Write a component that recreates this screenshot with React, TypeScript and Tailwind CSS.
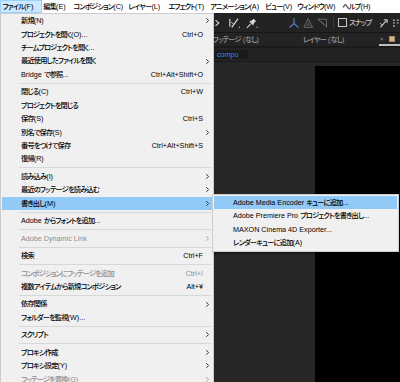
import React from 'react';

type Item =
  | { label: string; shortcut?: string; arrow?: boolean; disabled?: boolean; active?: boolean }
  | 'sep';

const items: Item[] = [
  { label: '新規(N)', arrow: true },
  { label: 'プロジェクトを開く(O)...', shortcut: 'Ctrl+O' },
  { label: 'チームプロジェクトを開く...' },
  { label: '最近使用したファイルを開く', arrow: true },
  { label: 'Bridge で参照...', shortcut: 'Ctrl+Alt+Shift+O' },
  'sep',
  { label: '閉じる(C)', shortcut: 'Ctrl+W' },
  { label: 'プロジェクトを閉じる' },
  { label: '保存(S)', shortcut: 'Ctrl+S' },
  { label: '別名で保存(S)', arrow: true },
  { label: '番号をつけて保存', shortcut: 'Ctrl+Alt+Shift+S' },
  { label: '復帰(R)' },
  'sep',
  { label: '読み込み(I)', arrow: true },
  { label: '最近のフッテージを読み込む', arrow: true },
  { label: '書き出し(M)', arrow: true, active: true },
  'sep',
  { label: 'Adobe からフォントを追加...' },
  'sep',
  { label: 'Adobe Dynamic Link', arrow: true, disabled: true },
  'sep',
  { label: '検索', shortcut: 'Ctrl+F' },
  'sep',
  { label: 'コンポジションにフッテージを追加', shortcut: 'Ctrl+/', disabled: true },
  { label: '複数アイテムから新規コンポジション', shortcut: 'Alt+¥' },
  'sep',
  { label: '依存関係', arrow: true },
  { label: 'フォルダーを監視(W)...' },
  'sep',
  { label: 'スクリプト', arrow: true },
  'sep',
  { label: 'プロキシ作成', arrow: true },
  { label: 'プロキシ設定(Y)', arrow: true },
  { label: 'フッテージを置換(G)', arrow: true, disabled: true },
];

const subItems = [
  'Adobe Media Encoder キューに追加...',
  'Adobe Premiere Pro プロジェクトを書き出し...',
  'MAXON Cinema 4D Exporter...',
  'レンダーキューに追加(A)',
];

const menubar: { label: string; w: string }[] = [
  { label: '編集(E)', w: 'w-[30px]' },
  { label: 'コンポジション(C)', w: 'w-[55px]' },
  { label: 'レイヤー(L)', w: 'w-[40px]' },
  { label: 'エフェクト(T)', w: 'w-[42px]' },
  { label: 'アニメーション(A)', w: 'w-[55px]' },
  { label: 'ビュー(V)', w: 'w-[32px]' },
  { label: 'ウィンドウ(W)', w: 'w-[45px]' },
  { label: 'ヘルプ(H)', w: 'w-[50px]' },
];

const CJK = /([\u3000-\u30ff\u4e00-\u9fff\uff00-\uffef]+)/;

function T({ s }: { s: string }) {
  return (
    <span className="whitespace-nowrap">
      {s.split(CJK).map((p, i) =>
        i % 2 === 1 ? (
          <span key={i} className="tracking-[-0.8px] font-medium">
            {p}
          </span>
        ) : (
          <React.Fragment key={i}>{p}</React.Fragment>
        )
      )}
    </span>
  );
}

function Chevron({ color }: { color: string }) {
  return (
    <svg width="5" height="7" viewBox="0 0 5 7">
      <path d="M1.3 1.2 L3.6 3.5 L1.3 5.8" fill="none" stroke={color} strokeWidth="0.9" />
    </svg>
  );
}

export default function App() {
  return (
    <div className="relative w-[400px] h-[382px] overflow-hidden bg-[#1d1d1d] font-['Liberation_Sans','Noto_Sans_CJK_JP',sans-serif] [font-feature-settings:'palt'] text-[7.2px] leading-none">
      {/* menubar */}
      <div className="flex h-[13px] bg-white text-black">
        <div className="w-[42px] h-full flex items-center pl-[1.5px] bg-[#cce8ff] border border-[#99d1ff]">
          <T s="ファイル(F)" />
        </div>
        {menubar.map((m) => (
          <div key={m.label} className={`${m.w} shrink-0 h-full flex items-center pl-[1.3px]`}>
            <T s={m.label} />
          </div>
        ))}
      </div>

      {/* application body */}
      <div className="flex flex-col h-[369px]">
        {/* toolbar */}
        <div className="flex items-center h-[19px] bg-[#232323] pl-[214px] text-[#c8c8c8]">
          <svg width="5" height="8" viewBox="0 0 5 8" className="ml-[1px]">
            <path d="M0.5 1 L4 4 L0.5 7" fill="none" stroke="#d6d6d6" strokeWidth="1.2" />
          </svg>
          <svg width="14" height="14" viewBox="0 0 14 14" className="ml-[7px]">
            <path d="M3 2.5 V11" stroke="#d6d6d6" strokeWidth="1.2" fill="none" />
            <path d="M5 11.5 L11.5 2.5" stroke="#d6d6d6" strokeWidth="1.3" fill="none" />
            <path d="M4.5 6 L6.5 8" stroke="#d6d6d6" strokeWidth="1" fill="none" />
            <path d="M12 11 L13.5 11 L13.5 12.5 Z" fill="#d6d6d6" />
          </svg>
          <svg width="14" height="14" viewBox="0 0 14 14" className="ml-[5px]">
            <path d="M2 12 L6 8" stroke="#d6d6d6" strokeWidth="1.1" />
            <path d="M4.5 5.5 L8.5 9.5 L9.5 7 L11.5 5 L9 2.5 L7 4.5 Z" fill="#d6d6d6" />
            <path d="M11.5 11 L13 11 L13 12.5 Z" fill="#d6d6d6" />
          </svg>
          <div className="ml-[28px] w-[14px] h-[14px] flex items-center justify-center">
            <svg width="14" height="14" viewBox="0 0 14 14">
              <path d="M7 2 V7.5 M7 7.5 L2.5 11.5 M7 7.5 L11.5 11.5" stroke="#4f7fc6" strokeWidth="1.2" fill="none" />
            </svg>
          </div>
          <svg width="13" height="14" viewBox="0 0 13 14" className="ml-[1px]">
            <path d="M6.5 2.5 L2 11.5 H11 Z" stroke="#6e6e6e" strokeWidth="1" fill="none" />
            <path d="M6.5 6 V8.5 M6.5 8.5 L4.5 10 M6.5 8.5 L8.5 10" stroke="#6e6e6e" strokeWidth="0.9" fill="none" />
          </svg>
          <svg width="13" height="14" viewBox="0 0 13 14" className="ml-[2px]">
            <path d="M2 3 H11 V11 Z" stroke="#6e6e6e" strokeWidth="1" fill="none" />
            <path d="M5 5 L9 9" stroke="#6e6e6e" strokeWidth="0.9" />
          </svg>
          <div className="ml-[5px] w-px h-[12px] bg-[#3a3a3a]" />
          <div className="ml-[4px] w-[9px] h-[9px] border border-[#c8c8c8]" />
          <div className="ml-[2px] w-[30px] text-[#c8c8c8]">
            <T s="スナップ" />
          </div>
          <svg width="10" height="12" viewBox="0 0 10 12" className="ml-[1px]">
            <path d="M1.5 10.5 L8 3" stroke="#d0d0d0" strokeWidth="1.1" />
            <path d="M5 2.5 H8.5 V6" stroke="#d0d0d0" strokeWidth="1.1" fill="none" />
            <path d="M1 6 L3.5 8.5" stroke="#d0d0d0" strokeWidth="0.9" />
          </svg>
          <svg width="8" height="10" viewBox="0 0 8 10" className="ml-[4px]">
            <path d="M1 2 H3 M1 5 H3 M1 8 H3 M5 2 H7 M5 5 H7" stroke="#c8c8c8" strokeWidth="1.1" />
          </svg>
        </div>
        <div className="h-px bg-[#161616]" />
        {/* panel tabs */}
        <div className="flex items-end h-[13px] bg-[#232323] pl-[190px] text-[#9a9a9a]">
          <div className="w-[69px] h-full flex items-center justify-end">
            <T s="フッテージ (なし)" />
          </div>
          <div className="w-[44px]" />
          <div className="w-[76px] h-full flex items-center">
            <T s="レイヤー (なし)" />
          </div>
          <div className="flex-1 h-full flex items-center border-b-2 border-[#bdbdbd] pl-[1px]">
            <span className="text-[6px] text-[#9a9a9a]">×</span>
            <div className="ml-[5px] w-[6px] h-[6px] bg-[#d2b384] border border-[#a88b5e]" />
          </div>
        </div>
        <div className="h-[2px] bg-[#1a1a1a]" />
        {/* comp sub tab */}
        <div className="flex items-center h-[13px] bg-[#232323] pl-[214px]">
          <div className="w-[34px] h-[9px] bg-[#1a1a1a] flex items-center pl-[3px] text-[#2f8ae8]">compo</div>
        </div>
        <div className="h-px bg-[#1a1a1a]" />
        {/* viewer */}
        <div className="flex-1 flex flex-col bg-[#262626]">
          <div className="h-[4px]" />
          <div className="flex-1 flex">
            <div className="w-[315px]" />
            <div className="flex-1 bg-black" />
          </div>
        </div>
      </div>

      {/* dropdown menu */}
      <div className="absolute left-0 top-[13px] w-[214px] h-[380px] bg-[#f0f0f0] border border-[#cccccc] px-[1px]">
        {items.map((it, i) =>
          it === 'sep' ? (
            <div key={i} className="h-[4px] flex items-center pl-[17px] pr-[1px]">
              <div className="h-px w-full bg-[#d7d7d7]" />
            </div>
          ) : (
            <div
              key={i}
              className={`flex items-center h-[13.45px] ${it.active ? 'bg-[#91c9f7]' : ''} ${
                it.disabled ? 'text-[#8d8d8d]' : 'text-black'
              }`}
            >
              <div className="w-[19px] shrink-0" />
              <div className="flex-1">
                <T s={it.label} />
              </div>
              {it.shortcut && <div className="whitespace-nowrap">{it.shortcut}</div>}
              <div className="w-[9px] shrink-0 flex justify-center">
                {it.arrow && <Chevron color={it.disabled ? '#9a9a9a' : '#222222'} />}
              </div>
            </div>
          )
        )}
      </div>

      {/* submenu */}
      <div className="absolute left-[212px] top-[194px] w-[187px] bg-[#f0f0f0] border border-[#cccccc] p-[1px] pb-[1.5px] shadow-[2px_2px_2px_rgba(0,0,0,0.35)]">
        {subItems.map((s, i) => (
          <div
            key={s}
            className={`flex items-center h-[13.3px] pl-[19px] text-black ${i === 0 ? 'bg-[#91c9f7]' : ''}`}
          >
            <T s={s} />
          </div>
        ))}
      </div>
    </div>
  );
}
